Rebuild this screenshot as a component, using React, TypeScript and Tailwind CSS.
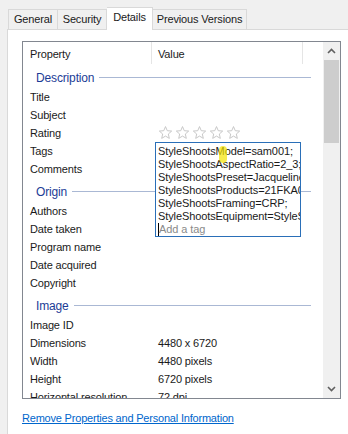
import React from "react";

const Star = ({ x }: { x: number }) => (
  <svg
    width="15"
    height="15"
    viewBox="0 0 24 24"
    className="absolute"
    style={{ left: x, top: 0 }}
  >
    <path
      d="M12 2.5l2.8 6.6 7.1.6-5.4 4.7 1.6 7-6.1-3.7-6.1 3.7 1.6-7L2.1 9.7l7.1-.6z"
      fill="none"
      stroke="#c4c4c4"
      strokeWidth="1.5"
      strokeLinejoin="round"
    />
  </svg>
);

const Group = ({ title }: { title: string }) => (
  <div className="flex items-center pl-[13px] pr-[12px] pt-[3px] h-[24px]">
    <span className="text-[#1c3c96] text-[12px] leading-none">{title}</span>
    <div className="flex-1 h-px bg-[#aab8d4] ml-[5px]" />
  </div>
);

const Row = ({ label, value }: { label: string; value?: string }) => (
  <div className="flex items-center h-[18px]">
    <div className="w-[135px] pl-[7px] whitespace-nowrap">{label}</div>
    <div className="whitespace-nowrap">{value}</div>
  </div>
);

const tags = [
  "StyleShootsModel=sam001;",
  "StyleShootsAspectRatio=2_3;",
  "StyleShootsPreset=Jacqueline",
  "StyleShootsProducts=21FKA0",
  "StyleShootsFraming=CRP;",
  "StyleShootsEquipment=StyleS",
];

export default function App() {
  return (
    <div
      className="w-[348px] h-[434px] bg-[#f0f0f0] overflow-hidden flex flex-col text-[11px] tracking-[-0.15px] text-[#1a1a1a]"
      style={{ fontFamily: '"Liberation Sans", Arial, sans-serif' }}
    >
      {/* tabs */}
      <div className="h-[29px] flex items-end pl-[8px] shrink-0">
        <div className="w-[50px] h-[20px] flex items-center justify-center border border-b-0 border-[#d9d9d9] bg-[#f0f0f0]">
          General
        </div>
        <div className="w-[49px] h-[20px] flex items-center justify-center border border-l-0 border-b-0 border-[#d9d9d9] bg-[#f0f0f0]">
          Security
        </div>
        <div className="w-[46px] h-[23px] -mb-px pb-[3px] flex items-center justify-center border border-l-0 border-b-0 border-[#d9d9d9] bg-white relative z-10">
          Details
        </div>
        <div className="w-[94px] h-[20px] flex items-center justify-center border border-l-0 border-b-0 border-[#d9d9d9] bg-[#f0f0f0]">
          Previous Versions
        </div>
      </div>

      {/* panel */}
      <div className="flex-1 ml-[7px] bg-white border-l border-t border-[#d9d9d9] pl-[14px] pt-[11px]">
        <div className="w-[319px] h-[358px] border border-[#828790] flex">
          <div className="flex-1 relative overflow-hidden">
            {/* header */}
            <div className="h-[22px] flex">
              <div className="w-[129px] pl-[7px] pt-[3px] flex items-center border-r border-[#e5e5e5]">
                Property
              </div>
              <div className="w-[151px] pl-[6px] pt-[3px] flex items-center border-r border-[#e5e5e5]">
                Value
              </div>
            </div>

            <Group title="Description" />
            <Row label="Title" />
            <Row label="Subject" />
            <div className="flex items-center h-[18px] relative">
              <div className="w-[135px] pl-[7px]">Rating</div>
              <div className="relative h-[15px] flex-1 -mt-[1px]">
                <Star x={0} />
                <Star x={17} />
                <Star x={34} />
                <Star x={51} />
                <Star x={68} />
              </div>
            </div>
            <Row label="Tags" />
            <Row label="Comments" />

            <Group title="Origin" />
            <Row label="Authors" />
            <Row label="Date taken" />
            <Row label="Program name" />
            <Row label="Date acquired" />
            <Row label="Copyright" />

            <Group title="Image" />
            <Row label="Image ID" />
            <Row label="Dimensions" value="4480 x 6720" />
            <Row label="Width" value="4480 pixels" />
            <Row label="Height" value="6720 pixels" />
            <Row label="Horizontal resolution" value="72 dpi" />

            {/* tag editor */}
            <div className="absolute left-[132px] top-[100px] w-[146px] h-[95px] bg-white border border-[#2a6fb8] overflow-hidden pl-[2px] pt-[2px] z-10 text-[11px] tracking-[-0.1px]">
              {tags.map((t) => (
                <div key={t} className="h-[13px] leading-[13px] whitespace-nowrap">
                  {t}
                </div>
              ))}
              <div className="h-[13px] leading-[13px] whitespace-nowrap flex items-center">
                <span className="w-px h-[13px] bg-black" />
                <span className="text-[#8a8a8a]">Add a tag</span>
              </div>
            </div>
            <div className="absolute left-[196px] top-[104px] w-[8px] h-[17px] rounded-full bg-[#f5e400] opacity-70 z-20" />
          </div>

          {/* scrollbar */}
          <div className="w-[17px] bg-[#f0f0f0] flex flex-col items-center">
            <div className="h-[18px] flex items-center justify-center">
              <svg width="9" height="6" viewBox="0 0 9 6">
                <path d="M1 5 L4.5 1.5 L8 5" fill="none" stroke="#606060" strokeWidth="1.6" />
              </svg>
            </div>
            <div className="w-[15px] h-[83px] bg-[#cdcdcd]" />
            <div className="flex-1" />
            <div className="h-[18px] flex items-center justify-center">
              <svg width="9" height="6" viewBox="0 0 9 6">
                <path d="M1 1 L4.5 4.5 L8 1" fill="none" stroke="#606060" strokeWidth="1.6" />
              </svg>
            </div>
          </div>
        </div>

        <div className="mt-[11px] text-[11px] tracking-[-0.2px] text-[#0066cc] underline whitespace-nowrap">
          Remove Properties and Personal Information
        </div>
      </div>
    </div>
  );
}
